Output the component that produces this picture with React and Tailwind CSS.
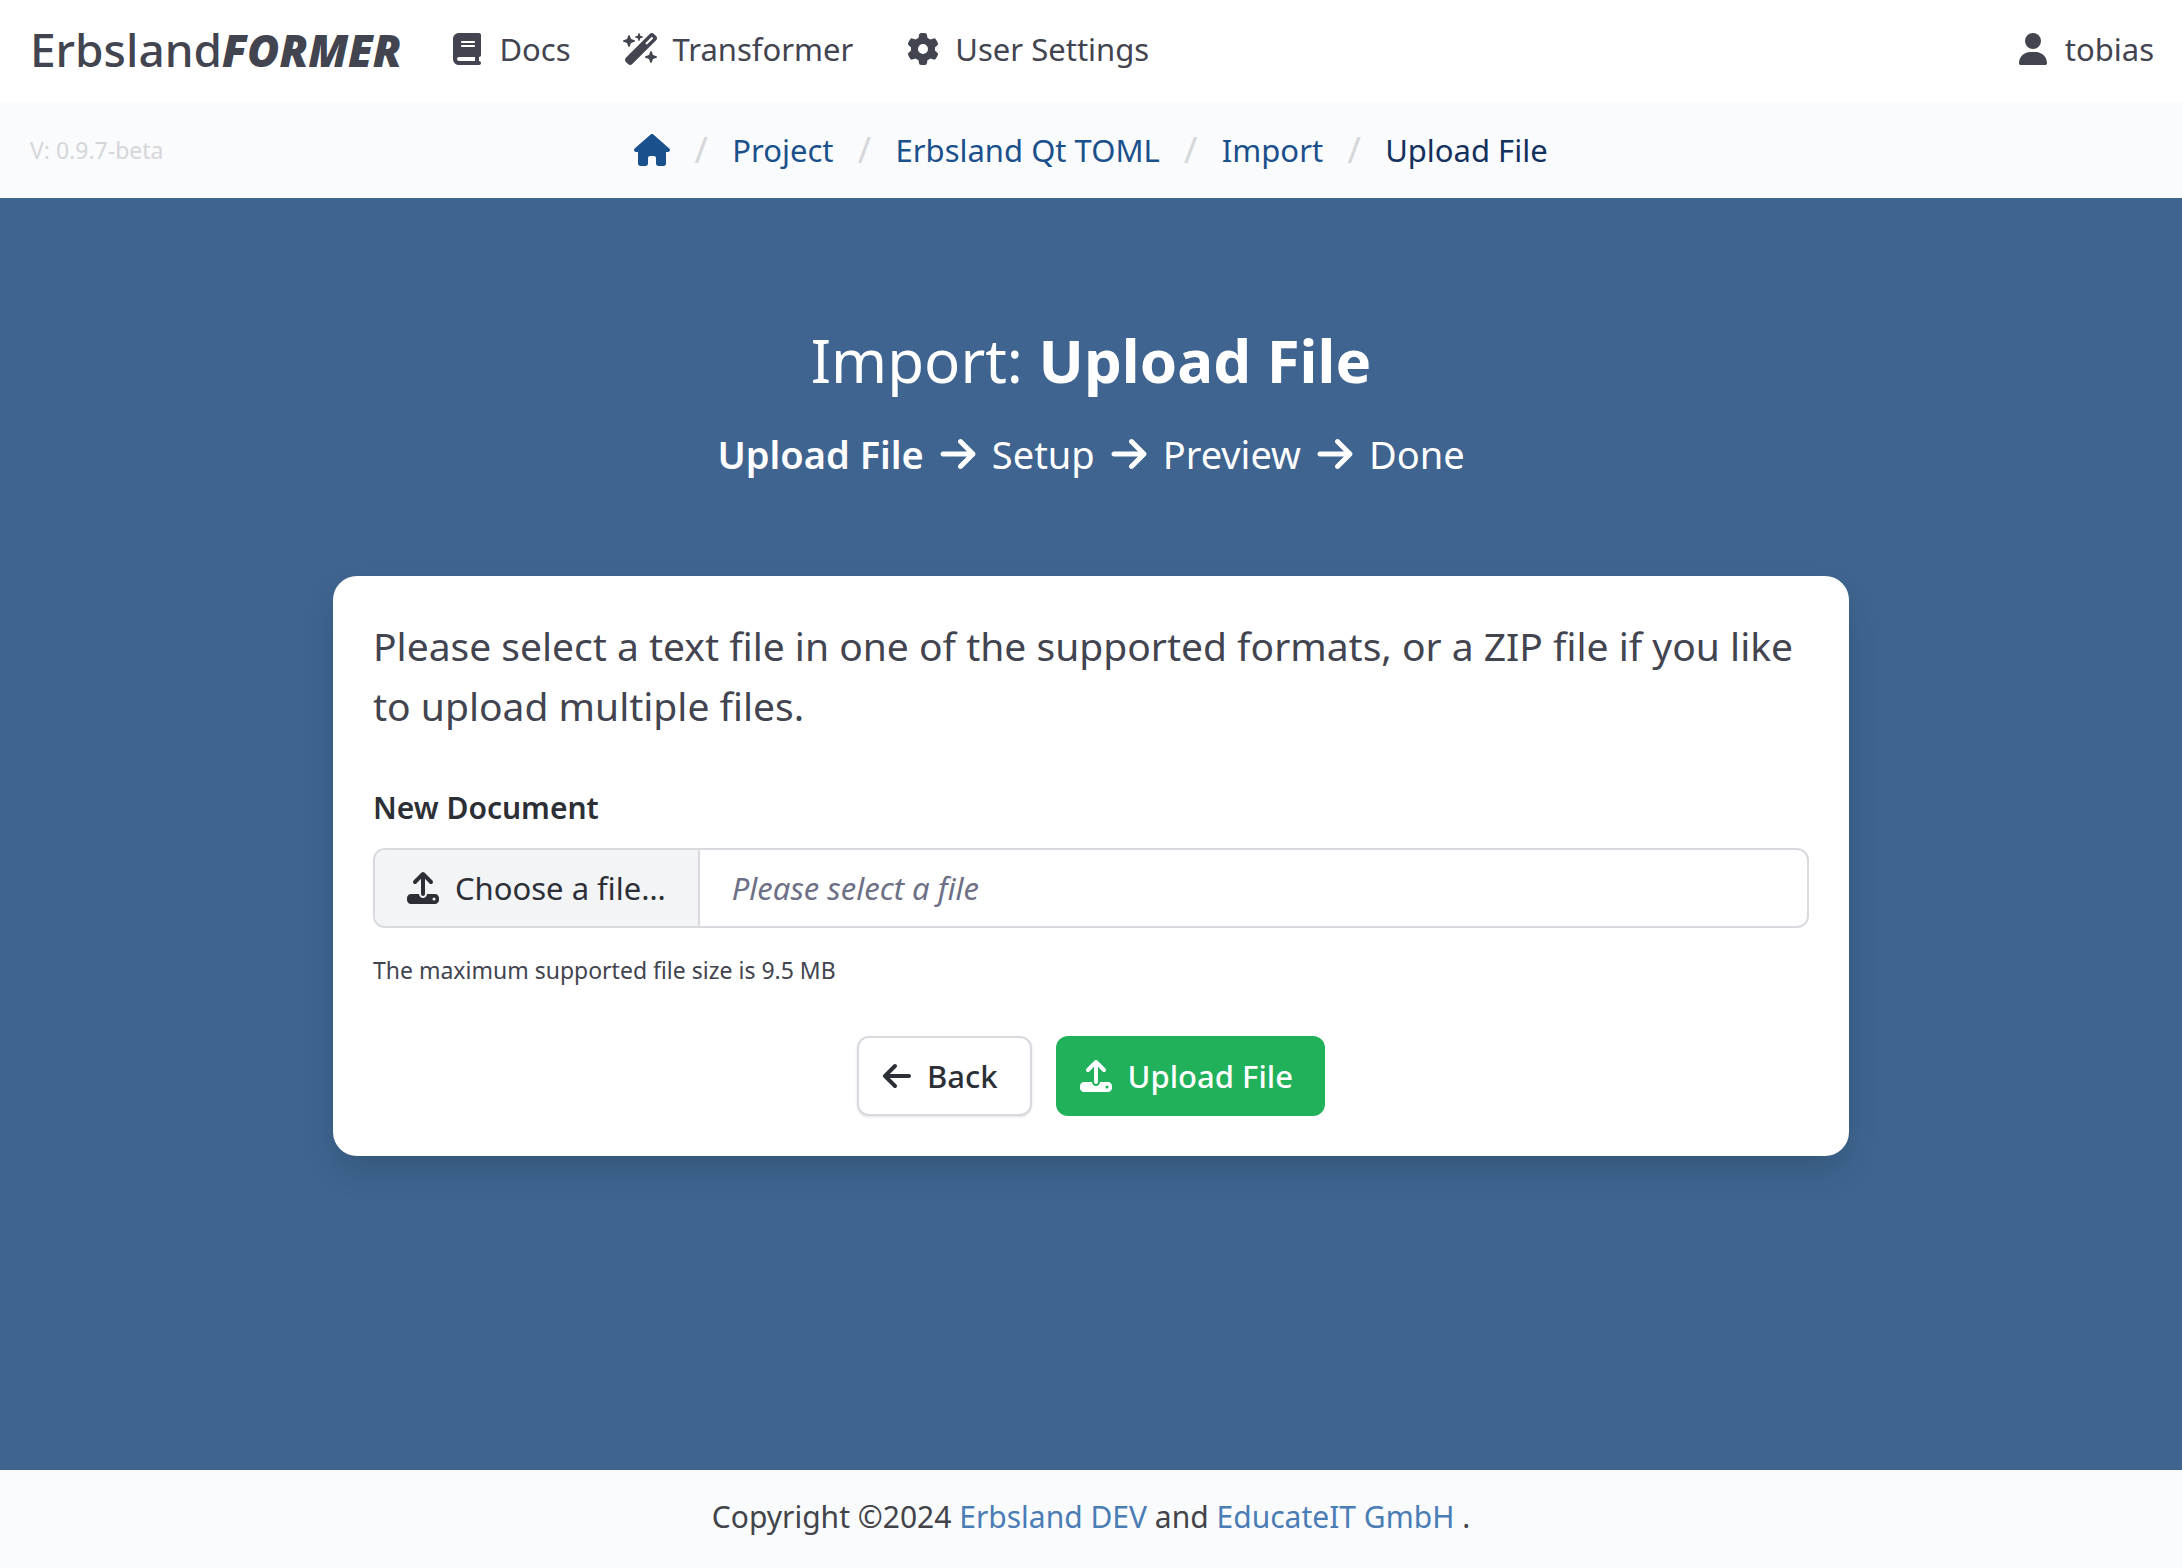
import React from "react";
import {
  FaArrowLeft,
  FaArrowRight,
  FaBook,
  FaGear,
  FaHouse,
  FaUpload,
  FaUser,
  FaWandMagicSparkles,
} from "react-icons/fa6";

const navItems = [
  { label: "Docs", icon: FaBook },
  { label: "Transformer", icon: FaWandMagicSparkles },
  { label: "User Settings", icon: FaGear },
];

const crumbs = ["Project", "Erbsland Qt TOML", "Import"];
const steps = ["Setup", "Preview", "Done"];

function NavLink({ icon: Icon, children }) {
  return (
    <a href="#" className="flex items-center gap-3.5">
      <Icon className="h-8 w-9" aria-hidden="true" />
      {children}
    </a>
  );
}

function Header() {
  return (
    <header className="flex h-[102px] items-center justify-between bg-white pr-7 pb-1 pl-[30px] text-[#42444f]">
      <div className="flex items-center">
        <a href="#" className="mr-12 text-[46px] leading-none font-medium">
          Erbsland<strong className="text-[44px] font-black italic">FORMER</strong>
        </a>
        <nav className="flex items-center gap-[52px]">
          {navItems.map((item) => (
            <NavLink key={item.label} icon={item.icon}>
              {item.label}
            </NavLink>
          ))}
        </nav>
      </div>
      <NavLink icon={FaUser}>tobias</NavLink>
    </header>
  );
}

function Separator() {
  return (
    <span className="w-[62px] text-center text-[36px] text-[#d5d7db]" aria-hidden="true">
      /
    </span>
  );
}

function Breadcrumb() {
  return (
    <div className="grid h-24 grid-cols-[1fr_auto_1fr] items-center bg-[#fafbfd] px-[30px]">
      <span className="text-[23px] text-[#d5d6da]">V: 0.9.7-beta</span>
      <nav aria-label="Breadcrumb">
        <ol className="flex items-center text-[#1a508b]">
          <li>
            <a href="#" aria-label="Home">
              <FaHouse className="h-8 w-9" />
            </a>
          </li>
          {crumbs.map((crumb) => (
            <li key={crumb} className="flex items-center">
              <Separator />
              <a href="#">{crumb}</a>
            </li>
          ))}
          <li className="flex items-center" aria-current="page">
            <Separator />
            <span className="text-[#14305c]">Upload File</span>
          </li>
        </ol>
      </nav>
    </div>
  );
}

function UploadCard() {
  return (
    <form className="w-full max-w-[1516px] rounded-3xl bg-white p-10 text-[#42444f] shadow-[0_16px_32px_-4px_rgba(10,40,40,0.2)]">
      <p className="text-[39px] leading-[60px]">
        Please select a text file in one of the supported formats, or a ZIP file if you like to
        upload multiple files.
      </p>
      <label
        htmlFor="document"
        className="mt-12 block text-[30px] leading-12 font-semibold text-[#2c2f36]"
      >
        New Document
      </label>
      <label
        htmlFor="document"
        className="mt-4 flex h-20 cursor-pointer overflow-hidden rounded-xl border-2 border-[#d8dadf]"
      >
        <input id="document" type="file" className="sr-only" />
        <span className="flex items-center gap-4 border-r-2 border-[#d8dadf] bg-[#f3f4f6] px-8 text-[#2c2f36]">
          <FaUpload className="size-8" aria-hidden="true" />
          Choose a file…
        </span>
        <span className="flex items-center px-8 text-[#6d7086] italic">Please select a file</span>
      </label>
      <p className="mt-6 text-[23px] leading-9">The maximum supported file size is 9.5 MB</p>
      <div className="mt-12 flex justify-center gap-6 font-medium">
        <button
          type="button"
          className="flex h-20 items-center gap-4 rounded-xl border-2 border-[#d8dadf] bg-white pr-8 pl-6 text-[#2c2f36] shadow-sm"
        >
          <FaArrowLeft className="h-8 w-7" aria-hidden="true" />
          Back
        </button>
        <button
          type="submit"
          className="flex h-20 items-center gap-4 rounded-xl bg-[#20b15a] pr-8 pl-6 text-white"
        >
          <FaUpload className="size-8" aria-hidden="true" />
          Upload File
        </button>
      </div>
    </form>
  );
}

export default function App() {
  return (
    <div className="flex min-h-screen flex-col font-['Noto_Sans',sans-serif] text-[31px] leading-12">
      <Header />
      <Breadcrumb />
      <main className="flex grow flex-col items-center bg-[#3f648f] px-10 pt-[122px] pb-20">
        <h1 className="text-[60px] leading-20 text-white">
          Import: <strong className="font-bold">Upload File</strong>
        </h1>
        <ol className="mt-6 mb-[92px] flex items-center gap-4 text-[38px] leading-[60px] text-white">
          <li className="font-semibold">Upload File</li>
          {steps.map((step) => (
            <li key={step} className="flex items-center gap-4">
              <FaArrowRight className="h-10 w-9" aria-hidden="true" />
              {step}
            </li>
          ))}
        </ol>
        <UploadCard />
      </main>
      <footer className="flex h-[98px] items-center justify-center bg-[#fafbfd] pb-1 text-[30px] text-[#42444a]">
        <p>
          Copyright ©2024{" "}
          <a href="#" className="text-[#4a7db5]">
            Erbsland DEV
          </a>{" "}
          and{" "}
          <a href="#" className="text-[#4a7db5]">
            EducateIT GmbH
          </a>{" "}
          .
        </p>
      </footer>
    </div>
  );
}
